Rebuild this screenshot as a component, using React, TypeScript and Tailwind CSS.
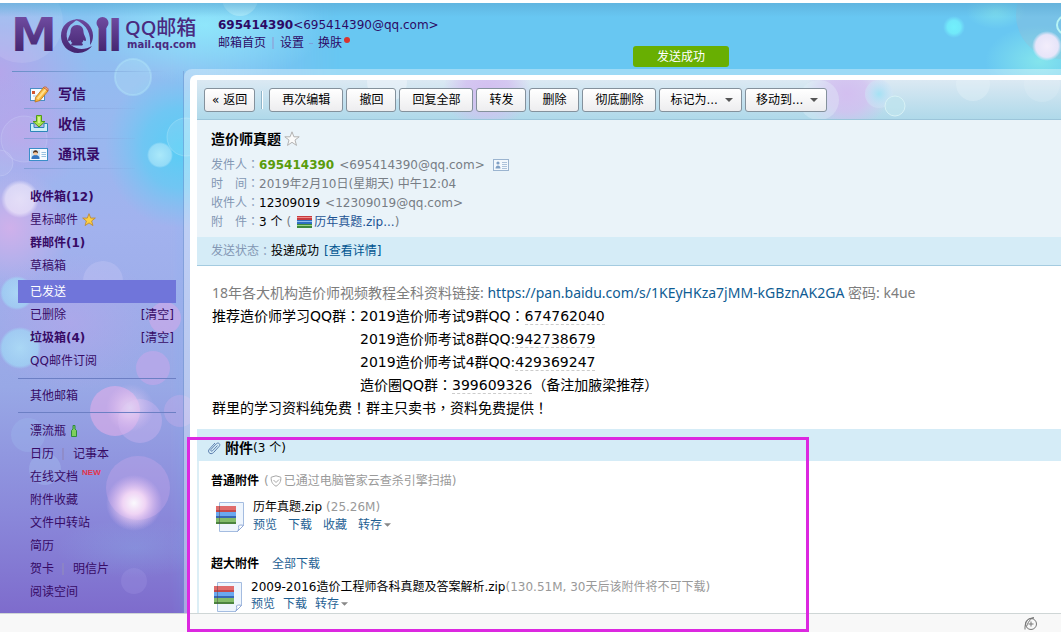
import React from "react";

const FONT = "font-['DejaVu_Sans','Noto_Sans_CJK_SC',sans-serif]";
const HUMAN = "font-['Noto_Sans','Noto_Sans_CJK_SC',sans-serif]";

/* Full-width punctuation set in the middle of its square */
function P({ children }: { children: React.ReactNode }) {
  return <span className="font-['Noto_Sans_CJK_TC',sans-serif] leading-none">{children}</span>;
}

function Backdrop() {
  return (
    <svg
      className="pointer-events-none absolute inset-0 h-full w-full"
      preserveAspectRatio="xMinYMin slice"
      aria-hidden="true"
    >
      <defs>
        <linearGradient id="side" x1="0" y1="0" x2="0" y2="1">
          <stop offset="0" stopColor="#84c6f3" />
          <stop offset="0.12" stopColor="#94bbf0" />
          <stop offset="0.35" stopColor="#a2b2ee" />
          <stop offset="0.6" stopColor="#98a8e6" />
          <stop offset="0.8" stopColor="#8a88da" />
          <stop offset="1" stopColor="#7a63c8" />
        </linearGradient>
        <linearGradient id="fade" x1="0" y1="0" x2="1" y2="0">
          <stop offset="0" stopColor="#fff" />
          <stop offset="0.5" stopColor="#fff" />
          <stop offset="1" stopColor="#000" />
        </linearGradient>
        <mask id="sideMask">
          <rect width="340" height="640" fill="url(#fade)" />
        </mask>
        <linearGradient id="topShade" x1="0" y1="0" x2="0" y2="1">
          <stop offset="0" stopColor="#5aa9d4" stopOpacity="0.6" />
          <stop offset="1" stopColor="#5aa9d4" stopOpacity="0" />
        </linearGradient>
        <radialGradient id="white">
          <stop offset="0" stopColor="#fff" stopOpacity="0.95" />
          <stop offset="0.4" stopColor="#fde0f8" stopOpacity="0.85" />
          <stop offset="1" stopColor="#f5c8f5" stopOpacity="0" />
        </radialGradient>
        <radialGradient id="violet">
          <stop offset="0" stopColor="#b8a4ea" stopOpacity="0.9" />
          <stop offset="1" stopColor="#b8a4ea" stopOpacity="0" />
        </radialGradient>
        <radialGradient id="pinkish">
          <stop offset="0" stopColor="#d4b0ea" stopOpacity="0.9" />
          <stop offset="1" stopColor="#d4b0ea" stopOpacity="0" />
        </radialGradient>
        <radialGradient id="cyan">
          <stop offset="0" stopColor="#58cdf5" />
          <stop offset="0.5" stopColor="#62cbf4" stopOpacity="0.75" />
          <stop offset="1" stopColor="#72c8f4" stopOpacity="0" />
        </radialGradient>
        <radialGradient id="pale">
          <stop offset="0" stopColor="#8fe6fb" />
          <stop offset="1" stopColor="#8fe6fb" stopOpacity="0" />
        </radialGradient>
        <radialGradient id="mint">
          <stop offset="0" stopColor="#8ff0ea" stopOpacity="0.9" />
          <stop offset="1" stopColor="#8ff0ea" stopOpacity="0" />
        </radialGradient>
        <radialGradient id="drop">
          <stop offset="0" stopColor="#72f0fc" />
          <stop offset="0.6" stopColor="#72ecfa" stopOpacity="0.9" />
          <stop offset="1" stopColor="#72e4fa" stopOpacity="0" />
        </radialGradient>
        <radialGradient id="ball">
          <stop offset="0" stopColor="#aeeafa" stopOpacity="0.95" />
          <stop offset="0.85" stopColor="#a0e0f8" stopOpacity="0.8" />
          <stop offset="1" stopColor="#a0e0f8" stopOpacity="0" />
        </radialGradient>
        <radialGradient id="pearl">
          <stop offset="0" stopColor="#f3edfb" />
          <stop offset="0.75" stopColor="#ece6fa" stopOpacity="0.95" />
          <stop offset="1" stopColor="#ece6fa" stopOpacity="0" />
        </radialGradient>
      </defs>
      <rect width="340" height="640" fill="url(#side)" mask="url(#sideMask)" />
      <ellipse cx="205" cy="22" rx="120" ry="60" fill="url(#pale)" />
      <ellipse cx="0" cy="70" rx="90" ry="100" fill="url(#violet)" />
      <ellipse cx="20" cy="130" rx="70" ry="60" fill="url(#violet)" />
      <ellipse cx="180" cy="145" rx="75" ry="80" fill="url(#cyan)" />
      <ellipse cx="10" cy="225" rx="60" ry="60" fill="url(#pinkish)" />
      <ellipse cx="70" cy="320" rx="90" ry="70" fill="url(#violet)" fillOpacity="0.6" />
      <circle cx="22" cy="19" r="41" fill="#fff" fillOpacity="0.1" />
      <circle cx="240" cy="-5" r="18" fill="#c8f6fc" fillOpacity="0.5" />
      <circle cx="133" cy="74" r="18" fill="#b6e8fa" fillOpacity="0.3" stroke="#b4e8fb" strokeOpacity="0.4" strokeWidth="2" />
      <circle cx="160" cy="152" r="13" fill="url(#ball)" />
      <circle cx="186" cy="134" r="19" fill="#b6e8fa" fillOpacity="0.2" stroke="#b4e8fb" strokeOpacity="0.4" />
      <circle cx="24" cy="136" r="23" fill="#d9d8fa" fillOpacity="0.12" stroke="#cfd6fa" strokeOpacity="0.3" />
      <circle cx="0" cy="160" r="13" fill="#d9d8fa" fillOpacity="0.15" stroke="#cfd6fa" strokeOpacity="0.3" />
      <circle cx="20" cy="196" r="19" fill="url(#pearl)" fillOpacity="0.75" />
      <circle cx="103" cy="278" r="20" fill="#c2c6f4" fillOpacity="0.4" />
      <circle cx="17" cy="290" r="17" fill="url(#ball)" fillOpacity="0.7" />
      <circle cx="20" cy="345" r="21" fill="url(#ball)" fillOpacity="0.75" />
      <circle cx="165" cy="315" r="16" fill="#dba8ea" fillOpacity="0.5" />
      <circle cx="153" cy="365" r="17" fill="#d3a6ea" fillOpacity="0.45" />
      <circle cx="115" cy="408" r="25" fill="#e8aeea" fillOpacity="0.55" />
      <circle cx="140" cy="418" r="22" fill="#d0b4f0" fillOpacity="0.4" />
      <circle cx="180" cy="408" r="16" fill="#cfaeea" fillOpacity="0.35" />
      <circle cx="130" cy="405" r="24" fill="url(#white)" fillOpacity="0.45" />
      <circle cx="138" cy="485" r="32" fill="#cfaaec" fillOpacity="0.35" />
      <circle cx="134" cy="500" r="28" fill="url(#white)" />
      <circle cx="45" cy="466" r="16" fill="#a9c2f2" fillOpacity="0.35" />
      <circle cx="28" cy="432" r="17" fill="#9fbcf0" fillOpacity="0.3" />
      <circle cx="134" cy="578" r="13" fill="#a69be6" fillOpacity="0.25" />
      <ellipse cx="135" cy="545" rx="80" ry="30" fill="url(#pale)" fillOpacity="0.15" />
      <circle cx="954" cy="24" r="11" fill="url(#drop)" />
      <ellipse cx="996" cy="8" rx="30" ry="18" fill="url(#mint)" fillOpacity="0.6" />
      <ellipse cx="1040" cy="58" rx="55" ry="36" fill="url(#mint)" fillOpacity="0.8" />
      <circle cx="1060" cy="12" r="44" fill="#a9b4c8" fillOpacity="0.25" />
      <circle cx="1047" cy="43" r="15" fill="url(#pearl)" />
      <circle cx="1066" cy="22" r="9" fill="none" stroke="#b6f4f4" strokeWidth="2" />
      <rect width="100%" height="14" fill="url(#topShade)" />
    </svg>
  );
}

function Logo() {
  return (
    <svg className="h-[60px] w-[110px] shrink-0" viewBox="0 0 110 60" role="img" aria-label="Mail">
      <defs>
        <linearGradient id="ink" x1="0" y1="14" x2="0" y2="50" gradientUnits="userSpaceOnUse">
          <stop offset="0" stopColor="#6f4ba0" />
          <stop offset="1" stopColor="#43246f" />
        </linearGradient>
      </defs>
      <g fill="url(#ink)" stroke="url(#ink)" fontFamily="DejaVu Sans" fontWeight="bold">
        <text x="0" y="48" fontSize="46" strokeWidth="0">M</text>
        <text x="86" y="47" fontSize="32" strokeWidth="2">i</text>
        <text x="97" y="48" fontSize="42" strokeWidth="0">l</text>
      </g>
      <g fill="url(#ink)">
        <circle cx="91.500" cy="20" r="6" />
        <path d="M67 16.500C57 16 50 23 50 33c0 9 7 17 17 17 6 0 11-3 14-7-7 4-15 4-21-1-7-6-5-18 2-22 1.500-1.500 3-2.500 5-3.500z" />
        <path d="M64 16.500c10-1.500 18 7 18 16 0 4-1 7-3 9.500C80 32 77 22 64 16.500z" />
        <path d="M66 22c-4.500 0-6.500 3.200-6.500 7 0 3-2.500 5-2.500 8 0 1.500 1.500 1 2.500 0 .3 1.500 1 2.500 2 3-1.500.5-2 2-.5 2.500h10c1.500-.5 1-2-.5-2.500 1-.5 1.700-1.500 2-3 1 1 2.500 1.500 2.500 0 0-3-2.500-5-2.500-8 0-3.800-2-7-6.500-7z" />
      </g>
    </svg>
  );
}

function ComposeIcon() {
  return (
    <svg className="h-5 w-5" viewBox="0 0 20 20" aria-hidden="true">
      <rect x="1.500" y="4.500" width="14" height="12" fill="#f7fbff" stroke="#4a8ec4" />
      <path d="M4 12h4" stroke="#a9c7de" />
      <rect x="3" y="7" width="3" height="3" fill="#d4552e" />
      <path d="M6.500 13.500L14.500 3.500l4.500 3.500L11 16.500 6 18z" fill="#f8b53c" stroke="#b9741a" strokeWidth=".8" />
      <path d="M14.500 3.500c1.500-2 6 1 4.500 3.500z" fill="#f5a07a" stroke="#a95323" strokeWidth=".6" />
      <path d="M8.500 15L16.500 5.500" stroke="#ffe08a" strokeWidth="2" />
    </svg>
  );
}

function InboxIcon() {
  return (
    <svg className="h-5 w-5" viewBox="0 0 20 20" aria-hidden="true">
      <path d="M1.500 9.500H5v4h10v-4h3.500v8h-17z" fill="#cdeefa" stroke="#2c86b8" />
      <path d="M7.500 1.500h5v6H16L10 13 4 7.500h3.500z" fill="#a9e14c" stroke="#4f9a1c" />
      <path d="M9 3h2v6H9z" fill="#d5f58e" />
    </svg>
  );
}

function ContactsIcon() {
  return (
    <svg className="h-5 w-5" viewBox="0 0 20 20" aria-hidden="true">
      <rect x=".5" y="4.500" width="18" height="12" fill="#f6fbff" stroke="#3b8ec8" />
      <rect x="2" y="6" width="9" height="9" fill="#cfe6f8" />
      <path d="M2.500 15c0-3 1.500-4 4-4s4 1 4 4z" fill="#3675c0" />
      <circle cx="6.500" cy="9" r="2.300" fill="#f7c79c" />
      <path d="M4 9.500c-.5-4.500 5.500-4.500 5 0-.8-1.800-4.200-1.800-5 0z" fill="#4a2c18" />
      <path d="M12.500 8.500H17M12.500 10.500H17M12.500 12.500H17" stroke="#7fb2d8" strokeWidth=".8" />
    </svg>
  );
}

function Books({ className }: { className: string }) {
  return (
    <svg className={className} viewBox="0 0 15 12" preserveAspectRatio="none" aria-hidden="true">
      <rect width="15" height="4" fill="#c63b3f" />
      <rect y="1" width="15" height="1" fill="#f08a88" />
      <rect y="4" width="15" height="4" fill="#2f6fc0" />
      <rect y="5" width="15" height="1" fill="#8dbcf0" />
      <rect y="8" width="15" height="4" fill="#3f8a3c" />
      <rect y="9" width="15" height="1" fill="#9fd48a" />
    </svg>
  );
}

function ZipFile() {
  return (
    <svg className="h-8 w-[30px] shrink-0" viewBox="0 0 30 32" aria-hidden="true">
      <path d="M4.500 1.500h24v23l-6 6h-18z" fill="#eef5fd" stroke="#a4bce0" />
      <path d="M28.500 24.500c-2-.8-4-.5-5 .3.500 2 .2 4-1 5.700z" fill="#fff" stroke="#8fa8d6" />
      <rect x="1" y="5" width="20" height="6" fill="#c4494c" />
      <rect x="1" y="5" width="20" height="4" fill="#e06c6c" />
      <rect x="1" y="11" width="20" height="6" fill="#3568b8" />
      <rect x="1" y="11" width="20" height="4" fill="#6aa8f0" />
      <rect x="1" y="17" width="20" height="6" fill="#4b8440" />
      <rect x="1" y="17" width="20" height="4" fill="#82bc6a" />
      <path d="M4.500 5v18" stroke="#5a4a50" strokeOpacity=".5" />
    </svg>
  );
}

function Caret({ className }: { className: string }) {
  return (
    <svg className={className} viewBox="0 0 8 4" aria-hidden="true">
      <path d="M0 0h8L4 4z" fill="currentColor" />
    </svg>
  );
}

const STAR = "M8 .8l1.900 5h5.300l-4.200 3.300 1.500 5.300L8 11.300l-4.500 3.100L5 9.100.8 5.800h5.300z";

function Row({ children, bold }: { children: React.ReactNode; bold?: boolean }) {
  return (
    <li className={bold ? "flex h-[23px] items-center pl-3 font-bold" : "flex h-[23px] items-center pl-3"}>
      {children}
    </li>
  );
}

function Bar() {
  return <span className="mr-[9px] ml-2 h-3 w-[2px] shrink-0 bg-[#8f87c0]/70" />;
}

function Sidebar() {
  return (
    <nav className="w-[184px] shrink-0 border-r border-[#6c8fcb]/50 text-xs text-[#370b66]">
      <div className="mr-4 ml-3 h-px bg-linear-to-r from-[#6a8fc8] to-[#6a8fc8]/0" />
      <ul className="mt-[7px] mr-12 ml-6 text-sm font-bold">
        {[
          { icon: <ComposeIcon />, label: "写信" },
          { icon: <InboxIcon />, label: "收信" },
          { icon: <ContactsIcon />, label: "通讯录" },
        ].map((item) => (
          <li key={item.label} className="flex h-[30px] flex-col">
            <a href="#" className="flex flex-1 items-center gap-[9px] pl-[5px]">
              {item.icon}
              {item.label}
            </a>
            <div className="h-px bg-linear-to-r from-[#7f9cd6]/90 to-[#7f9cd6]/10" />
          </li>
        ))}
      </ul>
      <ul className="mt-4 mr-[7px] ml-[18px]">
        <Row bold><a href="#">收件箱(12)</a></Row>
        <Row>
          <a href="#" className="flex items-center gap-1">
            星标邮件
            <svg className="h-[14px] w-[14px]" viewBox="0 0 16 16" aria-hidden="true">
              <path d={STAR} fill="#fdd044" stroke="#bf8a30" strokeWidth="1" />
            </svg>
          </a>
        </Row>
        <Row bold><a href="#">群邮件(1)</a></Row>
        <Row><a href="#">草稿箱</a></Row>
        <li className="mt-[3px] h-[23px] bg-[#7075da] text-white">
          <a href="#" className="flex h-full items-center pl-3" aria-current="page">已发送</a>
        </li>
        <Row>
          <a href="#" className="flex-1">已删除</a>
          <button type="button" className="pr-[2px]">[清空]</button>
        </Row>
        <Row bold>
          <a href="#" className="flex-1">垃圾箱(4)</a>
          <button type="button" className="pr-[2px] font-normal">[清空]</button>
        </Row>
        <Row><a href="#">QQ邮件订阅</a></Row>
      </ul>
      <ul className="mt-[6px] mr-[7px] ml-[18px] border-t border-[#6c7fc4] pt-[5px] pb-[5px]">
        <Row><a href="#">其他邮箱</a></Row>
      </ul>
      <ul className="mr-[7px] ml-[18px] border-t border-[#6c7fc4] pt-[6px]">
        <Row>
          <a href="#" className="flex items-center gap-[5px]">
            漂流瓶
            <svg className="h-3 w-[6px]" viewBox="0 0 6 12" aria-hidden="true">
              <path d="M2 .5h2v3.500l1.500 1.500v6h-5v-6L2 4z" fill="#7ed05c" stroke="#2e8a3e" />
            </svg>
          </a>
        </Row>
        <Row><a href="#">日历</a><Bar /><a href="#">记事本</a></Row>
        <Row>
          <a href="#" className="flex items-start gap-1">
            在线文档
            <span className="font-['Liberation_Sans',sans-serif] text-[8px] leading-[8px] font-bold text-[#e3344b]">NEW</span>
          </a>
        </Row>
        <Row><a href="#">附件收藏</a></Row>
        <Row><a href="#">文件中转站</a></Row>
        <Row><a href="#">简历</a></Row>
        <Row><a href="#">贺卡</a><Bar /><a href="#">明信片</a></Row>
        <Row><a href="#">阅读空间</a></Row>
      </ul>
    </nav>
  );
}

function Header() {
  return (
    <header className="flex h-[68px] pl-[11px] text-xs text-[#2c0a66]">
      <Logo />
      <div className="ml-1 w-[73px] pt-[14px] text-[#4a2a80]">
        <div className={`${HUMAN} text-[20px] leading-[22px] font-medium`}>QQ邮箱</div>
        <div className="ml-[2px] text-[10px] leading-[12px] font-bold">mail.qq.com</div>
      </div>
      <div className="ml-5 pt-[13px] leading-[18px]">
        <div><b>695414390</b>&lt;695414390@qq.com&gt;</div>
        <div className="flex items-center">
          <a href="#">邮箱首页</a>
          <span className="mx-[6px] h-3 w-[2px] bg-[#8f9fd6]/60" />
          <a href="#">设置</a>
          <span className="mx-[5px] h-px w-1 bg-[#7ba0dc]" />
          <a href="#">换肤</a>
          <span className="mb-[6px] ml-[2px] h-[6px] w-[6px] rounded-full bg-[#d8342e]" />
        </div>
      </div>
    </header>
  );
}

function ToolButton({ children, menu }: { children: React.ReactNode; menu?: boolean }) {
  return (
    <button
      type="button"
      className={
        menu
          ? "flex h-6 items-center rounded-[3px] border border-[#84919c] bg-linear-to-b from-white to-[#ededef] pr-2 pl-[10px] text-black"
          : "flex h-6 items-center rounded-[3px] border border-[#84919c] bg-linear-to-b from-white to-[#ededef] px-3 text-black"
      }
    >
      {children}
      {menu && <Caret className="ml-[7px] h-1 w-2 text-[#555]" />}
    </button>
  );
}

function Toolbar() {
  return (
    <div className="relative border-b border-[#9cc5da] bg-linear-to-b from-[#dbe9f3] to-[#afd9ea]">
      <svg className="pointer-events-none absolute inset-0 h-full w-full" aria-hidden="true">
        <defs>
          <radialGradient id="lilac">
            <stop offset="0" stopColor="#d3bff0" />
            <stop offset="0.5" stopColor="#d3bff0" stopOpacity="0.8" />
            <stop offset="1" stopColor="#d3bff0" stopOpacity="0" />
          </radialGradient>
          <radialGradient id="aqua">
            <stop offset="0" stopColor="#a4e2f4" />
            <stop offset="1" stopColor="#d0e4f6" stopOpacity="0.5" />
          </radialGradient>
        </defs>
        <ellipse cx="290" cy="10" rx="44" ry="40" fill="url(#lilac)" />
        <ellipse cx="650" cy="14" rx="42" ry="36" fill="url(#lilac)" />
        <circle cx="622" cy="20" r="20" fill="#e6f0fa" fillOpacity=".35" />
        <circle cx="682" cy="14" r="14" fill="url(#aqua)" />
        <circle cx="698" cy="26" r="10" fill="#bfe4ee" fillOpacity=".8" stroke="#d8f2f6" strokeWidth="1" />
        <circle cx="776" cy="4" r="17" fill="#e9f3fa" fillOpacity=".35" />
        <circle cx="190" cy="2" r="20" fill="#f1f6fb" fillOpacity=".5" />
        <circle cx="845" cy="4" r="18" fill="#e9f3fa" fillOpacity=".2" />
      </svg>
      <div className="relative flex h-[39px] items-center gap-[3px] pl-[7px]">
        <button
          type="button"
          className="flex h-6 items-center gap-1 rounded-[3px] border border-[#84919c] bg-linear-to-b from-white to-[#ededef] px-[7px] text-black"
        >
          <span>«</span>返回
        </button>
        <span className="mx-[3px] h-[18px] w-[2px] border-l border-[#90b5c9] bg-white" />
        <ToolButton>再次编辑</ToolButton>
        <ToolButton>撤回</ToolButton>
        <ToolButton>回复全部</ToolButton>
        <ToolButton>转发</ToolButton>
        <ToolButton>删除</ToolButton>
        <ToolButton>彻底删除</ToolButton>
        <ToolButton menu>标记为...</ToolButton>
        <ToolButton menu>移动到...</ToolButton>
      </div>
    </div>
  );
}

function Field({ label, children }: { label: string; children: React.ReactNode }) {
  return (
    <div className="flex h-[19px] items-center">
      <dt className="whitespace-pre text-[#8397b4]">{label}<P>：</P></dt>
      <dd className="flex items-center text-[#777d85]">{children}</dd>
    </div>
  );
}

function MailHead() {
  return (
    <>
      <div className="bg-[#eaf3f9] px-[14px] pt-[7px] pb-[6px]">
        <h1 className="mb-1 flex h-6 items-center gap-[3px] text-sm font-bold text-black">
          造价师真题
          <button type="button" aria-label="星标">
            <svg className="h-4 w-4" viewBox="0 0 16 16">
              <path d={STAR} fill="#fafafa" stroke="#b2b2b2" />
            </svg>
          </button>
        </h1>
        <dl>
          <Field label="发件人">
            <b className="text-[#5a9c0c]">695414390</b>
            <span className="ml-[5px]">&lt;695414390@qq.com&gt;</span>
            <svg className="ml-2 h-3 w-4" viewBox="0 0 16 12" aria-hidden="true">
              <rect x=".5" y=".5" width="15" height="11" fill="#f3f8fd" stroke="#9bb4d0" />
              <circle cx="5" cy="4" r="1.600" fill="#7f9fc4" />
              <path d="M2.500 9.500c0-4 5-4 5 0z" fill="#7f9fc4" />
              <path d="M9 3.500h5M9 5.500h5M9 7.500h5M9 9.500h5" stroke="#9bb4d0" strokeWidth=".8" />
            </svg>
          </Field>
          <Field label="时　间">2019年2月10日(星期天) 中午12:04</Field>
          <Field label="收件人">
            <span className="text-black">12309019</span>
            <span className="ml-[5px]">&lt;12309019@qq.com&gt;</span>
          </Field>
          <Field label="附　件">
            <span className="text-black">3 个</span>
            <span className="ml-1">(</span>
            <Books className="mr-[2px] ml-[6px] h-3 w-[15px]" />
            <a href="#" className="text-[#1e5494]">历年真题.zip...</a>
            <span>)</span>
          </Field>
        </dl>
      </div>
      <div className="flex h-[29px] items-center border-b border-[#a4cbe0] bg-[#d5ecf7] px-[14px] text-[#8397b4]">
        发送状态<P>：</P>
        <span className="text-black">投递成功</span>
        <a href="#" className="ml-[5px] text-[#005590]">[查看详情]</a>
      </div>
    </>
  );
}

function Num({ children }: { children: React.ReactNode }) {
  return <span className="border-b border-dashed border-[#ccc]">{children}</span>;
}

function MailBody() {
  return (
    <article className="px-[15px] pt-[15px] pb-[9px] text-sm leading-[23px] text-black">
      <p className={`${HUMAN} mb-px text-[#7d7d7d]`}>
        18年各大机构造价师视频教程全科资料链接:{" "}
        <a href="#" className="text-[#0f5c93]">https://pan.baidu.com/s/1KEyHKza7jMM-kGBznAK2GA</a>{" "}
        密码: k4ue
      </p>
      <div className="flex">
        <div className="w-[148px] shrink-0 whitespace-nowrap">推荐造价师学习QQ群<P>：</P></div>
        <div>
          <p>2019造价师考试9群QQ<P>：</P><Num>674762040</Num></p>
          <p>2019造价师考试8群QQ:<Num>942738679</Num></p>
          <p>2019造价师考试4群QQ:<Num>429369247</Num></p>
          <p>造价圈QQ群<P>：</P><Num>399609326</Num><P>（</P>备注加腋梁推荐<P>）</P></p>
        </div>
      </div>
      <p>群里的学习资料纯免费<P>！</P>群主只卖书<P>，</P>资料免费提供<P>！</P></p>
    </article>
  );
}

function FileLinks({ actions }: { actions: string[] }) {
  return (
    <>
      {actions.map((a) => (
        <a key={a} href="#">{a}</a>
      ))}
      <button type="button" className="flex items-center gap-[2px]">
        转存
        <Caret className="h-1 w-[7px] text-[#888]" />
      </button>
    </>
  );
}

function Attachments() {
  return (
    <section className="relative">
      <div className="flex h-8 items-center bg-[#d5ecf7] pt-[5px] pl-[10px] text-black">
        <svg className="mr-1 h-[14px] w-[14px]" viewBox="0 0 14 14" fill="none" stroke="#5c7fae" aria-hidden="true">
          <path d="M10.500 4.500L5.500 9.800c-1 1-2.500-.3-1.500-1.400l5.300-5.600c2-2 4.700.4 2.900 2.500L6.500 11.600c-3 2.900-6.700-.7-4-3.600L8 2" />
        </svg>
        <b className="text-sm">附件</b>(3 个)
      </div>
      <div className="border-l-2 border-[#dceef6] pl-3">
        <div className="flex h-10 items-center text-[#9a9a9a]">
          <b className="mr-[5px] text-black">普通附件</b>(
          <svg className="mx-px h-3 w-3" viewBox="0 0 12 12" fill="none" stroke="#a8a8a8" aria-hidden="true">
            <path d="M6 .8l4.800 1.400c.4 4-1.300 7.300-4.800 9-3.500-1.700-5.200-5-4.800-9z" />
            <path d="M3.500 5L6 7.500 9 4.500" />
          </svg>
          <span className="ml-px">已通过电脑管家云查杀引擎扫描)</span>
        </div>
        <div className="flex gap-2 pl-1">
          <ZipFile />
          <div className="-mt-1">
            <div className="flex h-5 items-center text-[#999]">
              <span className="mr-1 text-black">历年真题.zip</span>(25.26M)
            </div>
            <div className="flex h-4 items-center gap-[11px] text-[#1f5f94]">
              <FileLinks actions={["预览", "下载", "收藏"]} />
            </div>
          </div>
        </div>
        <div className="flex h-12 items-end gap-[13px] pb-[9px]">
          <b className="text-black">超大附件</b>
          <a href="#" className="text-[#1f5f94]">全部下载</a>
        </div>
        <div className="flex gap-2 pl-[2px]">
          <ZipFile />
          <div className="-mt-[2px]">
            <div className="flex h-4 items-center whitespace-nowrap text-[#999]">
              <span className="text-black">2009-2016造价工程师各科真题及答案解析.zip</span>
              <span>(130.51M, 30天后该附件将不可下载)</span>
            </div>
            <div className="flex h-[18px] items-center gap-2 text-[#1f5f94]">
              <FileLinks actions={["预览", "下载"]} />
            </div>
          </div>
        </div>
      </div>
      <div className="pointer-events-none absolute top-2 -left-[10px] h-[195px] w-[622px] border-3 border-[#dc28e0]" />
    </section>
  );
}

export default function App() {
  return (
    <div className={`${FONT} flex min-h-screen flex-col bg-white text-xs`}>
      <div className="relative mt-[3px] flex flex-1 flex-col bg-[#68c7f2]">
        <Backdrop />
        <div className="relative flex flex-1 flex-col">
          <Header />
          <div className="absolute top-[43px] left-[633px] flex h-[21px] w-24 items-center justify-center rounded-[3px] bg-[#68af02] text-white" role="status">
            发送成功
          </div>
          <div className="flex flex-1">
            <Sidebar />
            <main className="-mt-[2px] min-w-0 flex-1 rounded-tl-lg bg-white/35 pt-[6px] pl-[6px]">
              <div className="h-full rounded-tl-md bg-white pt-[5px] pl-[7px]">
                <Toolbar />
                <MailHead />
                <MailBody />
                <Attachments />
              </div>
            </main>
          </div>
        </div>
      </div>
      <footer className="flex h-[19px] items-center justify-end border-t border-[#cfd6d6] bg-[#f8f8f8] pr-6">
        <svg className="h-[13px] w-[13px]" viewBox="0 0 13 13" fill="none" stroke="#777" aria-hidden="true">
          <path d="M1 12.500C.5 5 4 .8 10 .8c-2 0-5 2-7.500 8.700" />
          <circle cx="7" cy="7" r="5.500" />
          <path d="M4.500 7h5M7 4.500v5" />
        </svg>
      </footer>
    </div>
  );
}
